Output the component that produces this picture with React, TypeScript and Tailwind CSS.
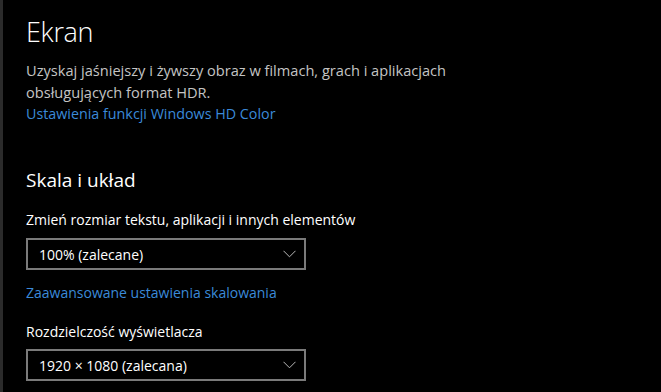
import React from 'react';

function Chevron() {
  return (
    <svg width="13" height="8" viewBox="0 0 13 8" fill="none" className="shrink-0">
      <path d="M0.5 0.8 L6.5 6.8 L12.5 0.8" stroke="#b8b8b8" strokeWidth="1" />
    </svg>
  );
}

function Dropdown({ value }: { value: string }) {
  return (
    <div className="w-[280px] h-[32px] border-2 border-[#7a7a7a] flex items-center justify-between pl-[11px] pr-[8px] text-[14px] text-white">
      <span>{value}</span>
      <Chevron />
    </div>
  );
}

export default function App() {
  return (
    <div
      className="w-[661px] h-[392px] bg-black flex overflow-hidden"
      style={{ fontFamily: '"Open Sans", "Noto Sans", sans-serif' }}
    >
      {/* pasek z lewej */}
      <div className="w-[3px] bg-[#2b2b2b] shrink-0" />

      <div className="pl-[23px] pt-[14px] flex flex-col">
        <h1 className="text-[27px] font-light text-white leading-[36px] tracking-[-0.3px]">Ekran</h1>

        <p className="mt-[9px] text-[14.6px] leading-[22px] text-[#c4c4c4] w-[460px]">
          Uzyskaj jaśniejszy i żywszy obraz w filmach, grach i aplikacjach obsługujących format HDR.
        </p>
        <a className="text-[14.3px] leading-[22px] text-[#3b8ad9]">Ustawienia funkcji Windows HD Color</a>

        <h2 className="mt-[42px] text-[19px] text-white leading-[26px]">Skala i układ</h2>

        <div className="mt-[17px] text-[14px] leading-[20px] text-white">
          Zmień rozmiar tekstu, aplikacji i innych elementów
        </div>
        <div className="mt-[8px]">
          <Dropdown value="100% (zalecane)" />
        </div>
        <a className="mt-[13px] text-[14px] leading-[20px] text-[#3b8ad9]">Zaawansowane ustawienia skalowania</a>

        <div className="mt-[19px] text-[14px] leading-[20px] text-white">Rozdzielczość wyświetlacza</div>
        <div className="mt-[7px]">
          <Dropdown value="1920 × 1080 (zalecana)" />
        </div>
      </div>
    </div>
  );
}
